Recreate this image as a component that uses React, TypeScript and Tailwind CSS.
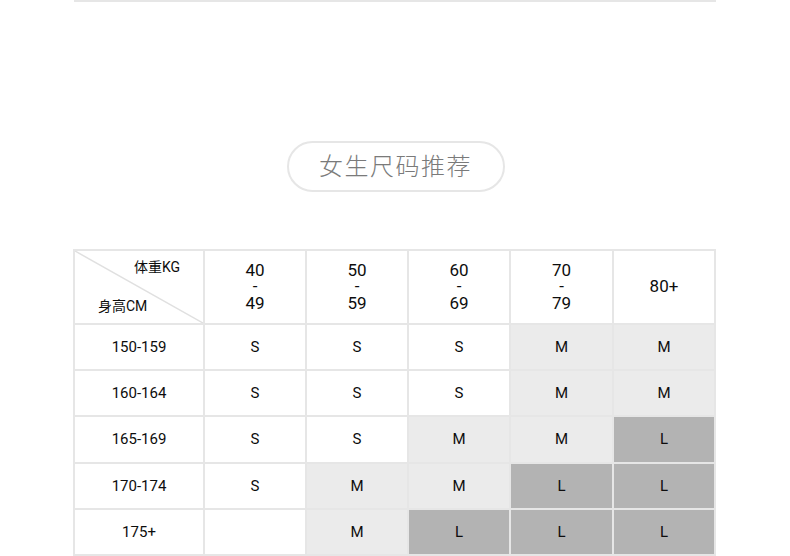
import React from "react";

const font = { fontFamily: 'Roboto, "Noto Sans CJK SC", sans-serif' };

type Cell = { t: string; c: "w" | "l" | "d" };

const rows: { h: string; cells: Cell[] }[] = [
  { h: "150-159", cells: [{ t: "S", c: "w" }, { t: "S", c: "w" }, { t: "S", c: "w" }, { t: "M", c: "l" }, { t: "M", c: "l" }] },
  { h: "160-164", cells: [{ t: "S", c: "w" }, { t: "S", c: "w" }, { t: "S", c: "w" }, { t: "M", c: "l" }, { t: "M", c: "l" }] },
  { h: "165-169", cells: [{ t: "S", c: "w" }, { t: "S", c: "w" }, { t: "M", c: "l" }, { t: "M", c: "l" }, { t: "L", c: "d" }] },
  { h: "170-174", cells: [{ t: "S", c: "w" }, { t: "M", c: "l" }, { t: "M", c: "l" }, { t: "L", c: "d" }, { t: "L", c: "d" }] },
  { h: "175+", cells: [{ t: "", c: "w" }, { t: "M", c: "l" }, { t: "L", c: "d" }, { t: "L", c: "d" }, { t: "L", c: "d" }] },
];

const bg = (c: Cell["c"]) =>
  c === "w" ? "bg-white" : c === "l" ? "bg-[#ebebeb]" : "bg-[#b3b3b3]";

const heads: string[][] = [["40", "49"], ["50", "59"], ["60", "69"], ["70", "79"]];

export default function App() {
  return (
    <div className="w-[790px] h-[556px] bg-white overflow-hidden text-[#0d0d0d]" style={font}>
      <div className="ml-[74px] w-[642px] h-[2px] bg-[#e6e6e6]" />
      <div className="flex justify-center mt-[139px]">
        <div className="ml-[1px] w-[218px] h-[51px] rounded-full border-2 border-[#e6e6e6] flex items-center justify-center text-[24px] font-light text-[#7a7a7a] tracking-[1.5px]">
          女生尺码推荐
        </div>
      </div>
      <div className="ml-[73px] mt-[57px] w-[643px] bg-[#e6e6e6] p-[2px] grid grid-cols-[128px_100px_100px_100px_101px_100px] grid-rows-[72px_44px_44px_45px_44px_44px] gap-[2px] text-[15px]">
        <div className="relative bg-white">
          <svg className="absolute inset-0" width="128" height="72" viewBox="0 0 128 72">
            <line x1="0" y1="0" x2="128" y2="72" stroke="#e0e0e0" strokeWidth="1.5" />
          </svg>
          <div className="absolute right-[23px] top-[6px] text-[14px]">体重KG</div>
          <div className="absolute left-[23px] top-[45px] text-[14px]">身高CM</div>
        </div>
        {heads.map((h) => (
          <div key={h[0]} className="bg-white flex items-center justify-center text-[17px] pb-[1px]">
            <div className="leading-[16.5px] text-center">
              {h[0]}
              <br />-<br />
              {h[1]}
            </div>
          </div>
        ))}
        <div className="bg-white flex items-center justify-center text-[17px]">80+</div>
        {rows.map((r) => (
          <React.Fragment key={r.h}>
            <div className="bg-white flex items-center justify-center">{r.h}</div>
            {r.cells.map((c, i) => (
              <div key={i} className={`${bg(c.c)} flex items-center justify-center`}>
                {c.t}
              </div>
            ))}
          </React.Fragment>
        ))}
      </div>
    </div>
  );
}
